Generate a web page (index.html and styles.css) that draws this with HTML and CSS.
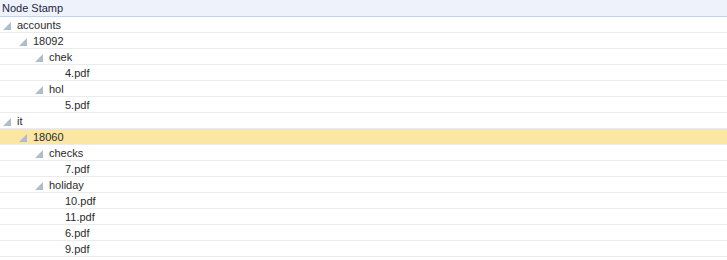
FILE: index.html
```html
<html>
<head>
  <title>Node Stamp</title>
  <link rel="stylesheet" href="styles.css">
</head>
<body>
  <div class="tree">
    <div class="tree-header">Node Stamp</div>

    <div class="row lvl0"><svg class="tw" viewBox="0 0 8 8"><polygon points="8,0 8,8 0,8"/></svg>accounts</div>
    <div class="row lvl1"><svg class="tw" viewBox="0 0 8 8"><polygon points="8,0 8,8 0,8"/></svg>18092</div>
    <div class="row lvl2"><svg class="tw" viewBox="0 0 8 8"><polygon points="8,0 8,8 0,8"/></svg>chek</div>
    <div class="row lvl3">4.pdf</div>
    <div class="row lvl2"><svg class="tw" viewBox="0 0 8 8"><polygon points="8,0 8,8 0,8"/></svg>hol</div>
    <div class="row lvl3">5.pdf</div>
    <div class="row lvl0"><svg class="tw" viewBox="0 0 8 8"><polygon points="8,0 8,8 0,8"/></svg>it</div>
    <div class="row lvl1 selected"><svg class="tw" viewBox="0 0 8 8"><polygon points="8,0 8,8 0,8"/></svg>18060</div>
    <div class="row lvl2"><svg class="tw" viewBox="0 0 8 8"><polygon points="8,0 8,8 0,8"/></svg>checks</div>
    <div class="row lvl3">7.pdf</div>
    <div class="row lvl2"><svg class="tw" viewBox="0 0 8 8"><polygon points="8,0 8,8 0,8"/></svg>holiday</div>
    <div class="row lvl3">10.pdf</div>
    <div class="row lvl3">11.pdf</div>
    <div class="row lvl3">6.pdf</div>
    <div class="row lvl3">9.pdf</div>
  </div>
</body>
</html>
```

FILE: styles.css
```css
body {
  margin: 0;
  background-color: #ffffff;
  font-family: "Liberation Sans", Arial, sans-serif;
  font-size: 11px;
  color: #2b2b2b;
}

.tree {
  width: 100%;
}

.tree-header {
  height: 16px;
  line-height: 16px;
  padding-left: 2px;
  background-color: #eef2fa;
  border-bottom: 1px solid #c6d3e6;
  color: #1f1f45;
}

.row {
  display: flex;
  align-items: center;
  height: 15px;
  border-bottom: 1px solid #ebebeb;
  white-space: nowrap;
}

.row.selected {
  background-color: #fbe6a4;
}

.tw {
  width: 8px;
  height: 8px;
  margin-left: -1px;
  margin-right: 6px;
  margin-top: 3px;
  fill: #b0bccd;
}

.lvl0 { padding-left: 4px; }
.lvl1 { padding-left: 20px; }
.lvl2 { padding-left: 36px; }
.lvl3 { padding-left: 65px; }
```
